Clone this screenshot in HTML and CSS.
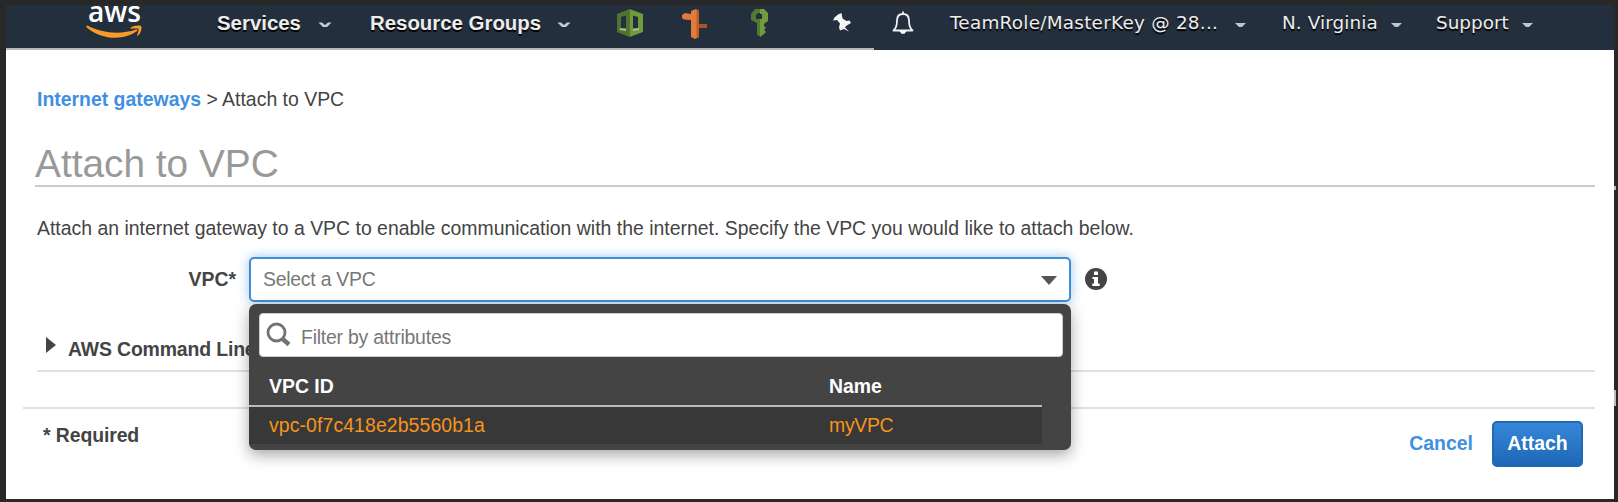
FILE: index.html
```html
<!DOCTYPE html>
<html lang="en">
<head>
<meta charset="utf-8">
<title>Attach to VPC</title>
<link rel="stylesheet" href="styles.css">
</head>
<body>
<div class="window">
  <header class="nav">
    <svg class="nav-logo" width="58" height="36" viewBox="0 0 58 36">
      <text class="logo-word" x="2" y="17" textLength="53" lengthAdjust="spacingAndGlyphs">aws</text>
      <path fill="#f79a28" d="M1.500 20.500C15 28 34 30 50 24.500c1.500-.5 2.300.7 1 1.600C38 36 15 35 .8 22.500c-1-1-.3-2.300.7-2z"/>
      <path fill="#f79a28" d="M44.500 22.800c3-2.400 9.500-2.800 10.700-1.600.9 1.600-.2 7-3.400 9.600-.6.400-1 .1-.7-.6.800-2 2-5.200 1.400-6.100-.7-.8-4.400-.5-7.400-.4-.8 0-1.100-.5-.6-.9z"/>
    </svg>
    <div class="nav-item nav-services"><span>Services</span><svg class="caret" width="14" height="8" viewBox="0 0 14 8"><path d="M.5.500h3.500L7 3l3-2.500h3.500L9 5H5z" fill="#c9cbcd"/></svg></div>
    <div class="nav-item nav-groups"><span>Resource Groups</span><svg class="caret" width="14" height="8" viewBox="0 0 14 8"><path d="M.5.500h3.500L7 3l3-2.500h3.500L9 5H5z" fill="#c9cbcd"/></svg></div>
    <div class="nav-shortcuts">
      <svg width="26" height="28" viewBox="0 0 26 28">
        <path fill="#4f7430" fill-rule="evenodd" d="M12.500 0L0 5v18l12.500 5zM4 8v12l5 1.500v-15z"/>
        <path fill="#719a3c" fill-rule="evenodd" d="M12.500 0L26 5v18l-13.500 5zM16 6.500v15l5-1.500V8z"/>
        <path fill="#a9bd93" d="M3 19l6 .5V22l-6-1zM16 19.500l6-.5v2l-6 1z"/>
      </svg>
      <svg width="26" height="30" viewBox="0 0 26 30">
        <path fill="#a85526" d="M16 15h9v4h-9z"/>
        <path fill="#e27a3a" d="M0 6l3-2 6 1V2l5-2 3 2v26l-4 2-4-2V11l-7-.5L0 9z"/>
        <path fill="#bd602c" d="M14.500 0L17 2v26l-2.500 1.500z"/>
      </svg>
      <svg width="17" height="28" viewBox="0 0 17 28">
        <path fill="#507a30" fill-rule="evenodd" d="M4 0h6v28l-4-2V14L0 11V5zM7 4L5 6v4h5V4z"/>
        <path fill="#729a3e" fill-rule="evenodd" d="M9 0h4l4 4v8l-4 3v2l2 2-2 2 2 2-2 2-4 3V10h2V5H9z"/>
      </svg>
    </div>
    <svg class="nav-pin" width="18" height="20" viewBox="0 0 18 20"><path fill="#f4f5f5" d="M5 1.500L8.500 0l1 5.500 4 2.500 3-.5 1.500 2.500-5 3-1 1.500 4 4-5-2.500-4 1.500-1-3 1-4L4 7 0 7.500 1.500 4.500z"/></svg>
    <svg class="nav-bell" width="22" height="23" viewBox="0 0 22 23"><path d="M11 .5v2M1.500 19.500c2.500-2 3.500-4 3.500-10C5 5 7.500 3 11 3s6 2 6 6.500c0 6 1 8 3.500 10z" fill="none" stroke="#eff0f1" stroke-width="1.800" stroke-linejoin="round"/><path d="M7.500 20h7l-2 2.800h-3z" fill="#fff"/></svg>
    <div class="nav-item nav-account"><span>TeamRole/MasterKey @ 28...</span><svg class="caret-small" width="11" height="5" viewBox="0 0 11 5"><path d="M0 0h11L7 4H4z" fill="#c3c5c6"/></svg></div>
    <div class="nav-item nav-region"><span>N. Virginia</span><svg class="caret-small" width="11" height="5" viewBox="0 0 11 5"><path d="M0 0h11L7 4H4z" fill="#c3c5c6"/></svg></div>
    <div class="nav-item nav-support"><span>Support</span><svg class="caret-small" width="11" height="5" viewBox="0 0 11 5"><path d="M0 0h11L7 4H4z" fill="#c3c5c6"/></svg></div>
  </header>
  <div class="nav-edge"></div>

  <main class="content">
    <nav class="breadcrumb"><a>Internet gateways</a> &gt; Attach to VPC</nav>
    <h1 class="title">Attach to VPC</h1>
    <p class="intro">Attach an internet gateway to a VPC to enable communication with the internet. Specify the VPC you would like to attach below.</p>
    <div class="field">
      <div class="field-label">VPC*</div>
      <div class="select">
        <span class="select-text">Select a VPC</span>
        <svg width="16" height="9" viewBox="0 0 16 9"><path d="M0 0h16L8 9z" fill="#555"/></svg>
        <div class="dropdown">
          <div class="filter">
            <svg width="26" height="26" viewBox="0 0 26 26"><circle cx="10.500" cy="11.500" r="8.500" fill="none" stroke="#737373" stroke-width="2.800"/><path d="M16 17.500l7 6" stroke="#737373" stroke-width="4.500"/></svg>
            <span>Filter by attributes</span>
          </div>
          <div class="option-row option-head"><span>VPC ID</span><span>Name</span></div>
          <div class="option-row option"><span class="option-id">vpc-0f7c418e2b5560b1a</span><span class="option-name">myVPC</span></div>
        </div>
      </div>
      <svg class="info" width="22" height="22" viewBox="0 0 22 22"><circle cx="11" cy="11" r="11" fill="#444"/><path fill="#fff" d="M9 3.500h4v3.500H9zM7.500 9H13v6.500h1.700V18H7.300v-2.500H9V11H7.500z"/></svg>
    </div>
    <div class="cli">
      <svg width="10" height="16" viewBox="0 0 10 16"><path d="M0 0l10 8-10 8z" fill="#444"/></svg>
      <span>AWS Command Line</span>
    </div>
  </main>
  <footer class="footer">
    <div class="required">* Required</div>
    <div class="actions"><a class="cancel">Cancel</a><div class="attach">Attach</div></div>
  </footer>
</div>
<div class="gutter"><div class="gutter-mark"></div><div class="gutter-mark gutter-mark-tall"></div></div>
</body>
</html>
```
FILE: styles.css
```css
* { box-sizing: border-box; }
body {
  margin: 0;
  height: 502px;
  overflow: hidden;
  display: flex;
  padding: 5px 0 3px 6px;
  background: #282828;
  color: #444;
  font: 19.43px/24px "Liberation Sans", Arial, sans-serif;
}
svg { display: block; flex: none; }
.window { width: 1608px; height: 494px; background: #fff; }

.nav { height: 43px; display: flex; align-items: flex-start; background: #242f3e; color: #ececec; white-space: nowrap; }
.nav-logo { margin-left: 80px; overflow: visible; }
.logo-word { font: 600 29px "Open Sans", sans-serif; fill: #fff; }
.nav-item { display: flex; margin-top: 6px; text-shadow: 0 2px 1px #000; }
.nav-item span { flex: none; }
.nav-services { width: 153px; margin-left: 73px; font-weight: bold; font-size: 20.4px; }
.nav-services span { width: 101px; }
.nav-groups { width: 247px; font-weight: bold; font-size: 20.4px; }
.nav-groups span { width: 187px; }
.caret { margin-top: 11px; }
.nav-shortcuts { display: flex; width: 216px; margin-top: 4px; }
.nav-shortcuts svg:nth-child(2) { margin-left: 39px; }
.nav-shortcuts svg:nth-child(3) { margin-left: 43px; }
.nav-pin { margin-top: 8px; }
.nav-bell { margin: 6px 0 0 41px; }
.nav-account, .nav-region, .nav-support { font-family: "DejaVu Sans", Verdana, sans-serif; font-size: 18.4px; }
.nav-account { width: 332px; margin-left: 36px; }
.nav-account span { width: 285px; letter-spacing: .25px; }
.nav-region { width: 154px; letter-spacing: .1px; }
.nav-region span { width: 109px; }
.nav-support span { width: 86px; }
.caret-small { margin-top: 12px; }
.nav-edge { height: 2px; width: 868px; background: #b9b6bb; box-shadow: 740px 0 #242f3e; }

.content { margin: 0 19px 0 31px; }
.breadcrumb { padding-top: 37px; height: 75px; }
.breadcrumb a { color: #3f90df; font-weight: bold; }
.title { margin: 0 0 0 -2px; height: 62px; padding-top: 15px; border-bottom: 2px solid #ccc; color: #999; font-weight: normal; font-size: 38.800px; line-height: 48px; }
.intro { margin: 0; padding-top: 29px; height: 70px; white-space: nowrap; }
.field { display: flex; align-items: flex-start; height: 80px; }
.field-label { width: 212px; padding: 10px 13px 0 0; text-align: right; font-weight: bold; }
.select { position: relative; display: flex; align-items: center; justify-content: space-between; width: 822px; height: 45px; padding: 0 12px; border: 2px solid #3c8edb; border-radius: 5px; background: #fff; box-shadow: 0 0 12px #9cc6ef; color: #777; }
.select > svg { margin-top: 1px; }
.select-text { margin-top: -2px; letter-spacing: -.25px; }
.dropdown { position: absolute; left: -2px; top: 45px; width: 822px; height: 146px; padding-top: 9px; border-radius: 7px; background: #444; box-shadow: 0 5px 15px rgba(0,0,0,.35); z-index: 2; }
.filter { display: flex; align-items: center; gap: 8px; width: 804px; height: 44px; margin-left: 10px; padding-left: 6px; border: 1px solid #ccc; border-radius: 4px; background: #fff; }
.filter svg { margin-top: -2px; }
.filter span { padding: 3px 0 0 1px; letter-spacing: -.22px; }
.option-row { display: grid; grid-template-columns: 560px 1fr; width: 793px; padding-left: 20px; }
.option-head { height: 50px; padding-top: 17px; border-bottom: 2px solid #bbb; color: #fff; font-weight: bold; }
.option { height: 37px; padding-top: 6px; background: #383838; color: #f7941e; }
.option-id { letter-spacing: .1px; }
.option-name { letter-spacing: -.3px; }
.info { margin: 11px 0 0 14px; }
.cli { display: flex; height: 35px; padding-left: 9px; gap: 12px; border-bottom: 2px solid #e0e0e0; font-weight: bold; }
.cli span { letter-spacing: -.15px; }

.footer { display: flex; justify-content: space-between; margin: 35px 19px 0 17px; border-top: 2px solid #e0e0e0; font-weight: bold; }
.required { padding: 14px 0 0 20px; letter-spacing: -.1px; }
.actions { display: flex; padding: 12px 12px 0 0; }
.cancel { padding-top: 10px; margin-right: 19px; color: #3f90df; }
.attach { width: 91px; height: 46px; border: 2px solid #2069b4; border-radius: 5px; background: linear-gradient(#3787d8, #1e67b8); color: #fff; text-align: center; line-height: 41px; }

.gutter { width: 4px; padding-top: 181px; }
.gutter-mark { width: 2px; height: 4px; background: #bbb; }
.gutter-mark-tall { height: 16px; margin-top: 200px; }
```
